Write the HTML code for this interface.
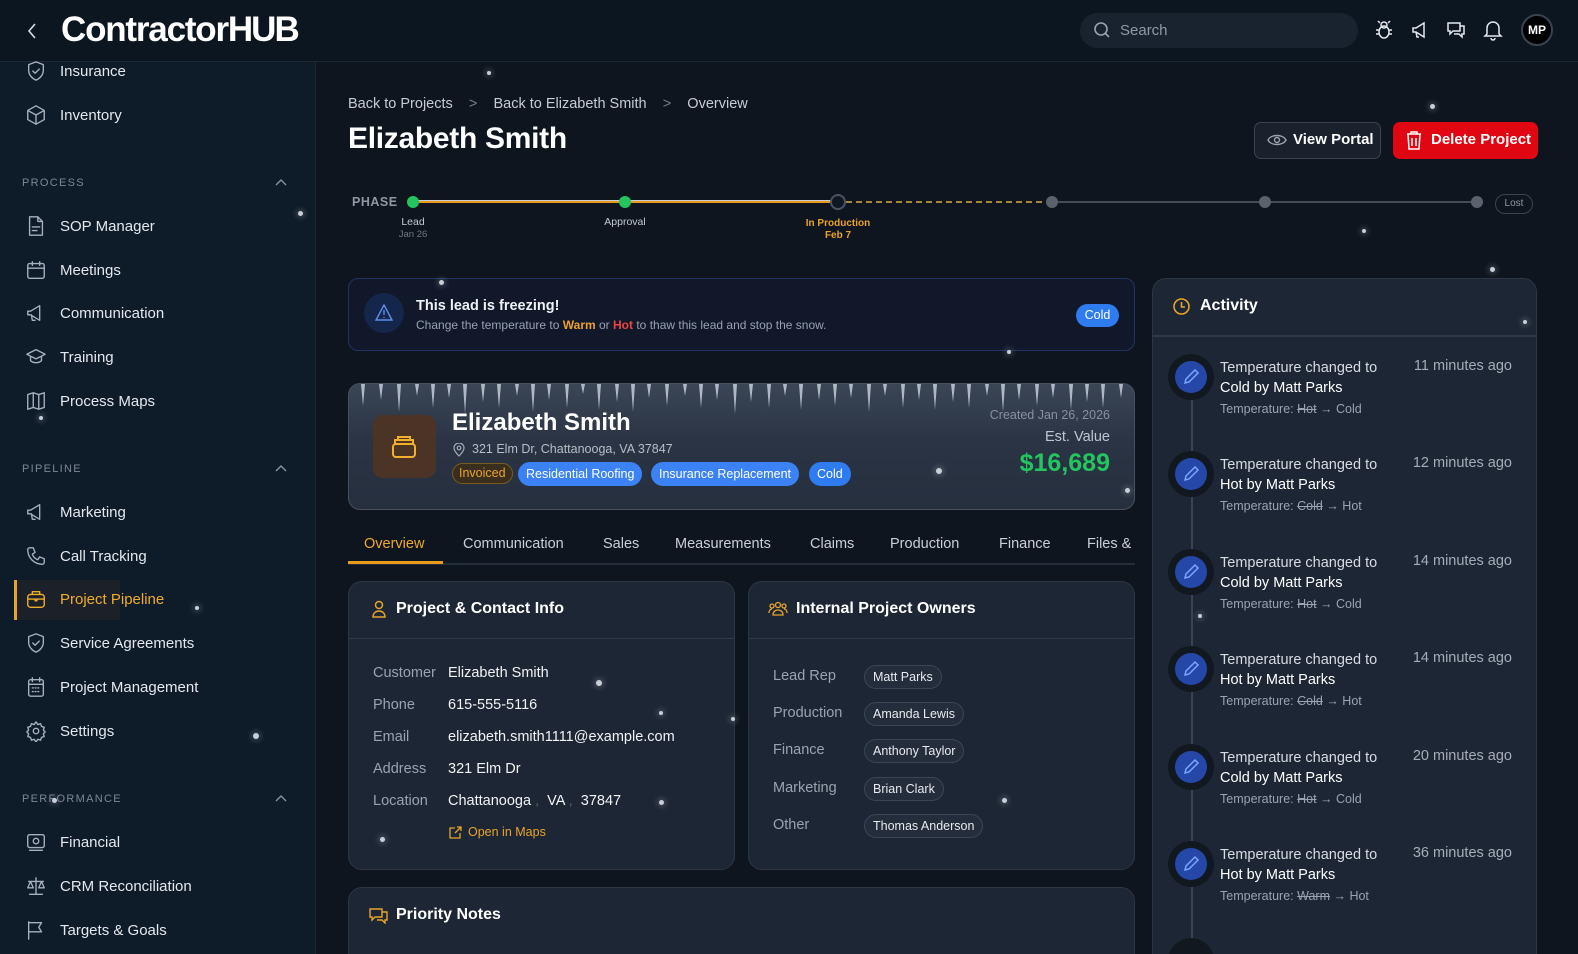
<!DOCTYPE html>
<html style="width:1578px;height:954px;overflow:hidden"><head><meta charset="utf-8">
<style>
*{box-sizing:border-box;margin:0;padding:0}
html,body{width:1578px;height:954px;overflow:hidden}
body{background:#0e151e;font-family:"Liberation Sans",sans-serif;color:#e6e9ee;position:relative}
.abs{position:absolute}
.top{left:0;top:0;width:1578px;height:62px;background:#0c1620;border-bottom:1px solid #1c2734}
.side{left:0;top:62px;width:316px;height:892px;background:#0e1b29;border-right:1px solid #1b2735}
.ni{position:absolute;left:0;width:316px;height:30px;display:flex;align-items:center;font-size:15px;color:#e4e8ee}
.ni svg{position:absolute;left:25px;width:22px;height:22px;fill:none;stroke:#a7b0bd;stroke-width:1.5;stroke-linecap:round;stroke-linejoin:round}
.ni span{position:absolute;left:60px}
.sec{position:absolute;left:22px;font-size:11px;letter-spacing:1.3px;color:#7d8794}
.chev{position:absolute;left:275px;width:12px;height:8px}
.card{position:absolute;background:#1d2634;border:1px solid #2c3645;border-radius:14px}
.lbl{position:absolute;font-size:14.5px;color:#9aa3b0}
.val{position:absolute;font-size:14.5px;color:#f1f3f6}
.pill{position:absolute;height:24px;border:1px solid #3a4556;background:#232d3b;border-radius:12px;font-size:12.5px;color:#e8ebef;padding:0 8px;line-height:22px}
.dot{position:absolute;border-radius:50%;background:#c9ced6;box-shadow:0 0 6px 2px rgba(200,210,225,.25)}
.act{position:absolute;left:1168px;width:360px;height:80px}
.act .ic{position:absolute;left:0;top:0;width:46px;height:46px;border-radius:50%;background:#121820}
.act .ic div{position:absolute;left:7px;top:7px;width:32px;height:32px;border-radius:50%;background:#2548a8}
.act .t{position:absolute;left:52px;top:4px;font-size:14.5px;color:#d7dce3;line-height:20px;width:180px}
.act .t b{font-weight:normal;color:#fff}
.act .s{position:absolute;left:52px;top:48px;font-size:12.5px;color:#9aa3b0}
.act .s s{color:#9aa3b0}
.act .tm{position:absolute;right:16px;top:4px;font-size:14.5px;color:#a5adb8}
.tab{position:absolute;top:536px;font-size:14.5px;color:#c9cfd7}
</style></head><body>

<!-- top bar -->
<div class="abs top"></div>
<svg class="abs" style="left:26px;top:22px" width="12" height="18" viewBox="0 0 12 18"><path d="M9 2 L3 9 L9 16" stroke="#d8dde4" stroke-width="1.6" fill="none"/></svg>
<div class="abs" style="left:61px;top:10px;font-size:35px;font-weight:bold;color:#fff;letter-spacing:-1.2px">Contractor<span style="letter-spacing:-2px">HUB</span></div>
<div class="abs" style="left:1080px;top:13px;width:278px;height:35px;border-radius:18px;background:#19232f"></div>
<svg class="abs" style="left:1093px;top:21px" width="18" height="18" viewBox="0 0 18 18"><circle cx="8" cy="8" r="6" stroke="#9aa3ad" stroke-width="1.6" fill="none"/><path d="M12.5 12.5 L16 16" stroke="#9aa3ad" stroke-width="1.6"/></svg>
<div class="abs" style="left:1120px;top:22px;font-size:15px;color:#8f98a4">Search</div>
<svg class="abs" style="left:1374px;top:20px" width="20" height="20" viewBox="0 0 20 20" fill="none" stroke="#e4e8ee" stroke-width="1.5"><ellipse cx="10" cy="12" rx="5" ry="6"/><circle cx="10" cy="5" r="3"/><path d="M5 10H2M15 10h3M5 14H2M15 14h3M6 3 4 1M14 3l2-2"/></svg>
<svg class="abs" style="left:1410px;top:20px" width="20" height="20" viewBox="0 0 20 20" fill="none" stroke="#e4e8ee" stroke-width="1.5"><path d="M3 8v4h3l8 5V3L6 8z M6 12l1 5h2"/></svg>
<svg class="abs" style="left:1446px;top:20px" width="20" height="20" viewBox="0 0 20 20" fill="none" stroke="#e4e8ee" stroke-width="1.5"><path d="M2 3h12v8H7l-3 3v-3H2z M14 6h4v8h-2v3l-3-3H8"/></svg>
<svg class="abs" style="left:1483px;top:19px" width="20" height="22" viewBox="0 0 20 22" fill="none" stroke="#e4e8ee" stroke-width="1.5"><path d="M4 15V9a6 6 0 0 1 12 0v6l2 2H2z M8 19a2 2 0 0 0 4 0"/></svg>
<div class="abs" style="left:1521px;top:14px;width:32px;height:32px;border-radius:50%;background:#000;border:2px solid #3a4350;font-size:12px;font-weight:bold;color:#fff;text-align:center;line-height:28px">MP</div>

<!-- sidebar -->
<div class="abs side"></div>
<div class="abs" style="left:14px;top:580px;width:106px;height:40px;background:#1c2028;border-left:3px solid #e9a326"></div>
<div class="ni" style="top:56px"><svg viewBox="0 0 24 24"><path d="M12 2l8 3v6c0 5-3.5 9-8 11-4.5-2-8-6-8-11V5z"/><path d="M8.5 12l2.5 2.5 4.5-4.5"/></svg><span>Insurance</span></div>
<div class="ni" style="top:100px"><svg viewBox="0 0 24 24"><path d="M12 2l9 5v10l-9 5-9-5V7z M3 7l9 5 9-5 M12 12v10"/></svg><span>Inventory</span></div>
<div class="sec" style="top:177px">PROCESS</div><svg class="chev" style="top:178px" viewBox="0 0 12 8"><path d="M1 7l5-5 5 5" stroke="#8a94a1" fill="none" stroke-width="1.4"/></svg>
<div class="ni" style="top:211px"><svg viewBox="0 0 24 24"><path d="M5 2h9l5 5v15H5z M14 2v5h5 M8 13h8 M8 17h5"/></svg><span>SOP Manager</span></div>
<div class="ni" style="top:255px"><svg viewBox="0 0 24 24"><rect x="3" y="5" width="18" height="16" rx="2"/><path d="M3 10h18 M8 3v4 M16 3v4"/></svg><span>Meetings</span></div>
<div class="ni" style="top:298px"><svg viewBox="0 0 24 24"><path d="M3 10v4h3l10 6V4L6 10z M7 14l1 6h3"/></svg><span>Communication</span></div>
<div class="ni" style="top:342px"><svg viewBox="0 0 24 24"><path d="M2 9l10-5 10 5-10 5z M6 11v5c3 3 9 3 12 0v-5"/></svg><span>Training</span></div>
<div class="ni" style="top:386px"><svg viewBox="0 0 24 24"><path d="M3 5l6-2 6 2 6-2v16l-6 2-6-2-6 2z M9 3v16 M15 5v16"/></svg><span>Process Maps</span></div>
<div class="sec" style="top:463px">PIPELINE</div><svg class="chev" style="top:464px" viewBox="0 0 12 8"><path d="M1 7l5-5 5 5" stroke="#8a94a1" fill="none" stroke-width="1.4"/></svg>
<div class="ni" style="top:497px"><svg viewBox="0 0 24 24"><path d="M3 10v4h3l10 6V4L6 10z M7 14l1 6h3"/></svg><span>Marketing</span></div>
<div class="ni" style="top:541px"><svg viewBox="0 0 24 24"><path d="M5 3h4l2 5-3 2c1 3 3 5 6 6l2-3 5 2v4c0 1-1 2-2 2C10 21 3 14 3 5c0-1 1-2 2-2z"/></svg><span>Call Tracking</span></div>
<div class="ni" style="top:584px;color:#f0ad2c"><svg viewBox="0 0 24 24" style="stroke:#f0ad2c"><rect x="3" y="7" width="18" height="14" rx="3"/><path d="M8 7V4h8v3 M3 12h18 M11 12v2h2v-2"/></svg><span>Project Pipeline</span></div>
<div class="ni" style="top:628px"><svg viewBox="0 0 24 24"><path d="M12 2l8 3v6c0 5-3.5 9-8 11-4.5-2-8-6-8-11V5z"/><path d="M8.5 12l2.5 2.5 4.5-4.5"/></svg><span>Service Agreements</span></div>
<div class="ni" style="top:672px"><svg viewBox="0 0 24 24"><rect x="4" y="4" width="16" height="18" rx="2"/><path d="M4 9h16 M8 2v4 M16 2v4 M8 13h1 M11 13h1 M14 13h1 M8 17h1 M11 17h1 M14 17h1"/></svg><span>Project Management</span></div>
<div class="ni" style="top:716px"><svg viewBox="0 0 24 24"><circle cx="12" cy="12" r="3"/><path d="M12 2l2 3 3-1 1 3 3 1-1 3 2 2-2 2 1 3-3 1-1 3-3-1-2 3-2-3-3 1-1-3-3-1 1-3-2-2 2-2-1-3 3-1 1-3 3 1z"/></svg><span>Settings</span></div>
<div class="sec" style="top:793px">PERFORMANCE</div><svg class="chev" style="top:794px" viewBox="0 0 12 8"><path d="M1 7l5-5 5 5" stroke="#8a94a1" fill="none" stroke-width="1.4"/></svg>
<div class="ni" style="top:827px"><svg viewBox="0 0 24 24"><rect x="3" y="4" width="18" height="14" rx="2"/><circle cx="12" cy="11" r="3"/><path d="M5 21h14"/></svg><span>Financial</span></div>
<div class="ni" style="top:871px"><svg viewBox="0 0 24 24"><path d="M12 3v18 M5 21h14 M4 7h16 M6 7l-3 7h6z M18 7l-3 7h6z"/></svg><span>CRM Reconciliation</span></div>
<div class="ni" style="top:915px"><svg viewBox="0 0 24 24"><path d="M4 22V3 M4 4h14l-3 5 3 5H4"/></svg><span>Targets &amp; Goals</span></div>

<!-- header -->
<div class="abs" style="left:348px;top:96px;font-size:14.5px;color:#c7ccd4;white-space:pre">Back to Projects    <span style="color:#777f8b">&gt;</span>    Back to Elizabeth Smith    <span style="color:#777f8b">&gt;</span>    Overview</div>
<div class="abs" style="left:348px;top:122px;font-size:30px;font-weight:bold;color:#fff;letter-spacing:-.3px">Elizabeth Smith</div>
<div class="abs" style="left:1254px;top:122px;width:127px;height:37px;border:1px solid #3a4454;border-radius:7px;background:#19212c"></div>
<svg class="abs" style="left:1267px;top:132px" width="20" height="16" viewBox="0 0 20 16" fill="none" stroke="#9aa3ae" stroke-width="1.4"><path d="M1 8c3-6 15-6 18 0-3 6-15 6-18 0z"/><circle cx="10" cy="8" r="2.5"/></svg>
<div class="abs" style="left:1293px;top:131px;font-size:15px;font-weight:bold;color:#fff">View Portal</div>
<div class="abs" style="left:1393px;top:122px;width:145px;height:37px;border-radius:7px;background:#e00712"></div>
<svg class="abs" style="left:1405px;top:130px" width="18" height="20" viewBox="0 0 18 20" fill="none" stroke="#fff" stroke-width="1.5"><path d="M2 4h14 M6 4V2h6v2 M3 4l1 15h10l1-15 M7 8v8 M11 8v8"/></svg>
<div class="abs" style="left:1431px;top:131px;font-size:15px;font-weight:bold;color:#fff">Delete Project</div>

<!-- phase -->
<div class="abs" style="left:352px;top:195px;font-size:12.5px;font-weight:bold;color:#8e97a3;letter-spacing:.5px">PHASE</div>
<div class="abs" style="left:413px;top:200px;width:419px;height:3px;background:#e89a1a;border-top:1px solid #c8ccd2"></div>
<div class="abs" style="left:846px;top:201px;width:206px;border-top:2px dashed #a88838"></div>
<div class="abs" style="left:1052px;top:201px;width:425px;height:2px;background:#454d59"></div>
<div class="abs" style="left:407px;top:196px;width:12px;height:12px;border-radius:50%;background:#22c55e"></div>
<div class="abs" style="left:619px;top:196px;width:12px;height:12px;border-radius:50%;background:#22c55e"></div>
<div class="abs" style="left:830px;top:194px;width:16px;height:16px;border-radius:50%;background:#101722;border:2px solid #4b5462"></div>
<div class="abs" style="left:1046px;top:196px;width:12px;height:12px;border-radius:50%;background:#5a626d"></div>
<div class="abs" style="left:1259px;top:196px;width:12px;height:12px;border-radius:50%;background:#5a626d"></div>
<div class="abs" style="left:1471px;top:196px;width:12px;height:12px;border-radius:50%;background:#5a626d"></div>
<div class="abs" style="left:1495px;top:194px;width:38px;height:20px;border:1px solid #3a4350;border-radius:10px;font-size:10px;color:#8f97a3;text-align:center;line-height:18px">Lost</div>
<div class="abs" style="left:393px;top:216px;width:40px;text-align:center;font-size:10.5px;color:#c5cad1">Lead<br><span style="color:#6f7884;font-size:9.5px">Jan 26</span></div>
<div class="abs" style="left:595px;top:216px;width:60px;text-align:center;font-size:10.5px;color:#c5cad1">Approval</div>
<div class="abs" style="left:798px;top:218px;width:80px;text-align:center;font-size:10px;font-weight:bold;color:#eaa227;line-height:12px">In Production<br>Feb 7</div>

<!-- alert -->
<div class="abs" style="left:348px;top:278px;width:787px;height:73px;border:1px solid #1f3465;border-radius:10px;background:#10182a"></div>
<div class="abs" style="left:364px;top:293px;width:40px;height:40px;border-radius:50%;background:#15264b"></div>
<svg class="abs" style="left:374px;top:303px" width="20" height="19" viewBox="0 0 20 19" fill="none" stroke="#5b8ef0" stroke-width="1.4"><path d="M10 2L18 17H2z M10 7v5 M10 14v1"/></svg>
<div class="abs" style="left:416px;top:298px;font-size:14.5px;font-weight:bold;color:#eef1f5">This lead is freezing!</div>
<div class="abs" style="left:416px;top:318px;font-size:12px;color:#98a2b5">Change the temperature to <b style="color:#f0a02a">Warm</b> or <b style="color:#ef4444">Hot</b> to thaw this lead and stop the snow.</div>
<div class="abs" style="left:1076px;top:304px;width:43px;height:23px;border-radius:12px;background:#2f7cf0;font-size:12.5px;color:#fff;text-align:center;line-height:23px">Cold</div>

<!-- project header card -->
<div class="abs" style="left:348px;top:383px;width:787px;height:127px;border-radius:12px;background:linear-gradient(180deg,#3a4555 0%,#2a3444 45%,#252f3e 100%);border:1px solid #46505f;overflow:hidden">
<svg width="787" height="60" style="position:absolute;left:0;top:0">
<g fill="#cdd5e0" opacity=".8">
<polygon points="12,0 16,0 14,22"/><polygon points="30,0 34,0 32,16"/><polygon points="48,0 52,0 50,28"/><polygon points="66,0 70,0 68,12"/><polygon points="82,0 86,0 84,24"/><polygon points="98,0 102,0 100,14"/><polygon points="114,0 118,0 116,30"/><polygon points="132,0 136,0 134,18"/><polygon points="148,0 152,0 150,24"/><polygon points="166,0 170,0 168,12"/><polygon points="182,0 186,0 184,28"/><polygon points="198,0 202,0 200,16"/><polygon points="216,0 220,0 218,24"/><polygon points="232,0 236,0 234,10"/><polygon points="248,0 252,0 250,26"/><polygon points="266,0 270,0 268,18"/><polygon points="282,0 286,0 284,28"/><polygon points="298,0 302,0 300,14"/><polygon points="316,0 320,0 318,22"/><polygon points="334,0 338,0 336,12"/><polygon points="350,0 354,0 352,24"/><polygon points="366,0 370,0 368,16"/><polygon points="384,0 388,0 386,30"/><polygon points="400,0 404,0 402,18"/><polygon points="418,0 422,0 420,24"/><polygon points="434,0 438,0 436,12"/><polygon points="450,0 454,0 452,26"/><polygon points="468,0 472,0 470,16"/><polygon points="484,0 488,0 486,22"/><polygon points="500,0 504,0 502,14"/><polygon points="518,0 522,0 520,28"/><polygon points="534,0 538,0 536,12"/><polygon points="552,0 556,0 554,24"/><polygon points="568,0 572,0 570,16"/><polygon points="584,0 588,0 586,26"/><polygon points="602,0 606,0 604,18"/><polygon points="618,0 622,0 620,24"/><polygon points="636,0 640,0 638,12"/><polygon points="652,0 656,0 654,28"/><polygon points="668,0 672,0 670,16"/><polygon points="686,0 690,0 688,22"/><polygon points="702,0 706,0 704,14"/><polygon points="720,0 724,0 722,26"/><polygon points="736,0 740,0 738,18"/><polygon points="752,0 756,0 754,24"/><polygon points="770,0 774,0 772,14"/>
</g></svg>
</div>
<div class="abs" style="left:373px;top:415px;width:63px;height:63px;border-radius:10px;background:#4b3425"></div>
<svg class="abs" style="left:390px;top:433px" width="28" height="28" viewBox="0 0 28 28" fill="none" stroke="#f3b02a" stroke-width="2"><rect x="3" y="11" width="22" height="13" rx="3"/><path d="M5 11V7h18v4 M8 7V4h12v3"/></svg>
<div class="abs" style="left:452px;top:409px;font-size:24px;font-weight:bold;color:#fff">Elizabeth Smith</div>
<svg class="abs" style="left:453px;top:443px" width="12" height="14" viewBox="0 0 12 14" fill="none" stroke="#a3abb7" stroke-width="1.2"><path d="M6 13S1 8 1 5a5 5 0 0 1 10 0c0 3-5 8-5 8z"/><circle cx="6" cy="5" r="1.8"/></svg>
<div class="abs" style="left:472px;top:442px;font-size:12.5px;color:#b7bec8">321 Elm Dr, Chattanooga, VA 37847</div>
<div class="abs" style="left:452px;top:463px;height:21px;padding:0 6px;border:1px solid #7a5a1f;border-radius:11px;background:#3a2e1e;font-size:12.5px;color:#eaa42a;line-height:19px">Invoiced</div>
<div class="abs" style="left:518px;top:462px;height:24px;padding:0 8px;border-radius:12px;background:#3b82f6;font-size:12.5px;color:#fff;line-height:24px">Residential Roofing</div>
<div class="abs" style="left:651px;top:462px;height:24px;padding:0 8px;border-radius:12px;background:#3b82f6;font-size:12.5px;color:#fff;line-height:24px">Insurance Replacement</div>
<div class="abs" style="left:809px;top:462px;height:24px;padding:0 8px;border-radius:12px;background:#2f7cf0;font-size:12.5px;color:#fff;line-height:24px">Cold</div>
<div class="abs" style="left:910px;top:408px;width:200px;text-align:right;font-size:12.5px;color:#8790a0">Created Jan 26, 2026</div>
<div class="abs" style="left:910px;top:429px;width:200px;text-align:right;font-size:14.5px;color:#bfc6d0">Est. Value</div>
<div class="abs" style="left:910px;top:449px;width:200px;text-align:right;font-size:25px;font-weight:bold;color:#22c55e">$16,689</div>

<!-- tabs -->
<div class="abs" style="left:348px;top:563px;width:787px;height:2px;background:#242d3a"></div>
<div class="abs" style="left:348px;top:561px;width:95px;height:3px;background:#e89a1a"></div>
<div class="tab" style="left:364px;color:#f0a92a">Overview</div>
<div class="tab" style="left:463px">Communication</div>
<div class="tab" style="left:603px">Sales</div>
<div class="tab" style="left:675px">Measurements</div>
<div class="tab" style="left:810px">Claims</div>
<div class="tab" style="left:890px">Production</div>
<div class="tab" style="left:999px">Finance</div>
<div class="tab" style="left:1087px">Files &amp;</div>

<!-- contact card -->
<div class="card" style="left:348px;top:581px;width:387px;height:289px"></div>
<div class="abs" style="left:349px;top:638px;width:385px;height:1px;background:#2f3948"></div>
<svg class="abs" style="left:371px;top:600px" width="16" height="18" viewBox="0 0 16 18" fill="none" stroke="#eaa42a" stroke-width="1.5"><circle cx="8" cy="5" r="3.5"/><path d="M2 17c0-4 3-6 6-6s6 2 6 6z"/></svg>
<div class="abs" style="left:396px;top:600px;font-size:16px;font-weight:bold;color:#fff">Project &amp; Contact Info</div>
<div class="lbl" style="left:373px;top:665px">Customer</div><div class="val" style="left:448px;top:665px">Elizabeth Smith</div>
<div class="lbl" style="left:373px;top:697px">Phone</div><div class="val" style="left:448px;top:697px">615-555-5116</div>
<div class="lbl" style="left:373px;top:729px">Email</div><div class="val" style="left:448px;top:729px">elizabeth.smith1111@example.com</div>
<div class="lbl" style="left:373px;top:761px">Address</div><div class="val" style="left:448px;top:761px">321 Elm Dr</div>
<div class="lbl" style="left:373px;top:793px">Location</div><div class="val" style="left:448px;top:793px;white-space:pre">Chattanooga <span style="color:#555e6b">,</span>  VA <span style="color:#555e6b">,</span>  37847</div>
<svg class="abs" style="left:449px;top:826px" width="13" height="13" viewBox="0 0 13 13" fill="none" stroke="#eaa42a" stroke-width="1.3"><path d="M6 2H1v10h10V7 M8 1h4v4 M12 1L6 7"/></svg>
<div class="abs" style="left:468px;top:825px;font-size:12.5px;color:#eaa42a">Open in Maps</div>

<!-- owners card -->
<div class="card" style="left:748px;top:581px;width:387px;height:289px"></div>
<div class="abs" style="left:749px;top:638px;width:385px;height:1px;background:#2f3948"></div>
<svg class="abs" style="left:768px;top:601px" width="20" height="16" viewBox="0 0 20 16" fill="none" stroke="#eaa42a" stroke-width="1.3"><circle cx="10" cy="4" r="2.5"/><circle cx="4" cy="5" r="2"/><circle cx="16" cy="5" r="2"/><path d="M5 14c0-3 2-5 5-5s5 2 5 5z M1 12c0-2 1-4 3-4 M19 12c0-2-1-4-3-4"/></svg>
<div class="abs" style="left:796px;top:600px;font-size:16px;font-weight:bold;color:#fff">Internal Project Owners</div>
<div class="lbl" style="left:773px;top:668px">Lead Rep</div><div class="pill" style="left:864px;top:665px">Matt Parks</div>
<div class="lbl" style="left:773px;top:705px">Production</div><div class="pill" style="left:864px;top:702px">Amanda Lewis</div>
<div class="lbl" style="left:773px;top:742px">Finance</div><div class="pill" style="left:864px;top:739px">Anthony Taylor</div>
<div class="lbl" style="left:773px;top:780px">Marketing</div><div class="pill" style="left:864px;top:777px">Brian Clark</div>
<div class="lbl" style="left:773px;top:817px">Other</div><div class="pill" style="left:864px;top:814px">Thomas Anderson</div>

<!-- priority notes -->
<div class="card" style="left:348px;top:887px;width:787px;height:100px"></div>
<svg class="abs" style="left:369px;top:907px" width="19" height="17" viewBox="0 0 19 17" fill="none" stroke="#eaa42a" stroke-width="1.4"><path d="M1 2h12v8H6l-3 3v-3H1z M13 5h5v8h-2v3l-3-3H8"/></svg>
<div class="abs" style="left:396px;top:906px;font-size:16px;font-weight:bold;color:#fff">Priority Notes</div>

<!-- activity -->
<div class="card" style="left:1152px;top:278px;width:385px;height:700px"></div>
<div class="abs" style="left:1153px;top:335px;width:383px;height:2px;background:#2f3948"></div>
<svg class="abs" style="left:1172px;top:297px" width="19" height="19" viewBox="0 0 19 19" fill="none" stroke="#eaa42a" stroke-width="1.6"><circle cx="9.5" cy="9.5" r="7.5"/><path d="M9.5 5v5h3.5"/></svg>
<div class="abs" style="left:1200px;top:297px;font-size:16px;font-weight:bold;color:#fff">Activity</div>
<div class="abs" style="left:1191px;top:400px;width:2px;height:560px;background:#3a4351"></div>

<div class="act" style="top:354px"><div class="ic"><div><svg width="32" height="32" viewBox="0 0 32 32" fill="none" stroke="#7aa6ff" stroke-width="1.5"><path d="M10 22l1-4 9-9 3 3-9 9z"/></svg></div></div><div class="t">Temperature changed to <b>Cold by Matt Parks</b></div><div class="s">Temperature: <s>Hot</s> → Cold</div><div class="tm">11 minutes ago</div></div>
<div class="act" style="top:451px"><div class="ic"><div><svg width="32" height="32" viewBox="0 0 32 32" fill="none" stroke="#7aa6ff" stroke-width="1.5"><path d="M10 22l1-4 9-9 3 3-9 9z"/></svg></div></div><div class="t">Temperature changed to <b>Hot by Matt Parks</b></div><div class="s">Temperature: <s>Cold</s> → Hot</div><div class="tm">12 minutes ago</div></div>
<div class="act" style="top:549px"><div class="ic"><div><svg width="32" height="32" viewBox="0 0 32 32" fill="none" stroke="#7aa6ff" stroke-width="1.5"><path d="M10 22l1-4 9-9 3 3-9 9z"/></svg></div></div><div class="t">Temperature changed to <b>Cold by Matt Parks</b></div><div class="s">Temperature: <s>Hot</s> → Cold</div><div class="tm">14 minutes ago</div></div>
<div class="act" style="top:646px"><div class="ic"><div><svg width="32" height="32" viewBox="0 0 32 32" fill="none" stroke="#7aa6ff" stroke-width="1.5"><path d="M10 22l1-4 9-9 3 3-9 9z"/></svg></div></div><div class="t">Temperature changed to <b>Hot by Matt Parks</b></div><div class="s">Temperature: <s>Cold</s> → Hot</div><div class="tm">14 minutes ago</div></div>
<div class="act" style="top:744px"><div class="ic"><div><svg width="32" height="32" viewBox="0 0 32 32" fill="none" stroke="#7aa6ff" stroke-width="1.5"><path d="M10 22l1-4 9-9 3 3-9 9z"/></svg></div></div><div class="t">Temperature changed to <b>Cold by Matt Parks</b></div><div class="s">Temperature: <s>Hot</s> → Cold</div><div class="tm">20 minutes ago</div></div>
<div class="act" style="top:841px"><div class="ic"><div><svg width="32" height="32" viewBox="0 0 32 32" fill="none" stroke="#7aa6ff" stroke-width="1.5"><path d="M10 22l1-4 9-9 3 3-9 9z"/></svg></div></div><div class="t">Temperature changed to <b>Hot by Matt Parks</b></div><div class="s">Temperature: <s>Warm</s> → Hot</div><div class="tm">36 minutes ago</div></div>
<div class="abs" style="left:1168px;top:938px;width:46px;height:46px;border-radius:50%;background:#121820"></div>

<!-- snow -->
<div class="dot" style="left:487px;top:71px;width:4px;height:4px"></div>
<div class="dot" style="left:298px;top:211px;width:5px;height:5px"></div>
<div class="dot" style="left:39px;top:416px;width:4px;height:4px"></div>
<div class="dot" style="left:439px;top:280px;width:5px;height:5px"></div>
<div class="dot" style="left:1007px;top:350px;width:4px;height:4px"></div>
<div class="dot" style="left:936px;top:468px;width:6px;height:6px"></div>
<div class="dot" style="left:1125px;top:488px;width:5px;height:5px"></div>
<div class="dot" style="left:1490px;top:267px;width:5px;height:5px"></div>
<div class="dot" style="left:1430px;top:104px;width:5px;height:5px"></div>
<div class="dot" style="left:1362px;top:229px;width:4px;height:4px"></div>
<div class="dot" style="left:1523px;top:320px;width:4px;height:4px"></div>
<div class="dot" style="left:596px;top:680px;width:6px;height:6px"></div>
<div class="dot" style="left:659px;top:711px;width:4px;height:4px"></div>
<div class="dot" style="left:659px;top:800px;width:5px;height:5px"></div>
<div class="dot" style="left:380px;top:837px;width:5px;height:5px"></div>
<div class="dot" style="left:253px;top:733px;width:6px;height:6px"></div>
<div class="dot" style="left:195px;top:606px;width:4px;height:4px"></div>
<div class="dot" style="left:1002px;top:798px;width:5px;height:5px"></div>
<div class="dot" style="left:1198px;top:614px;width:4px;height:4px"></div>
<div class="dot" style="left:731px;top:717px;width:4px;height:4px"></div>
<div class="dot" style="left:52px;top:798px;width:5px;height:5px"></div>
</body></html>
